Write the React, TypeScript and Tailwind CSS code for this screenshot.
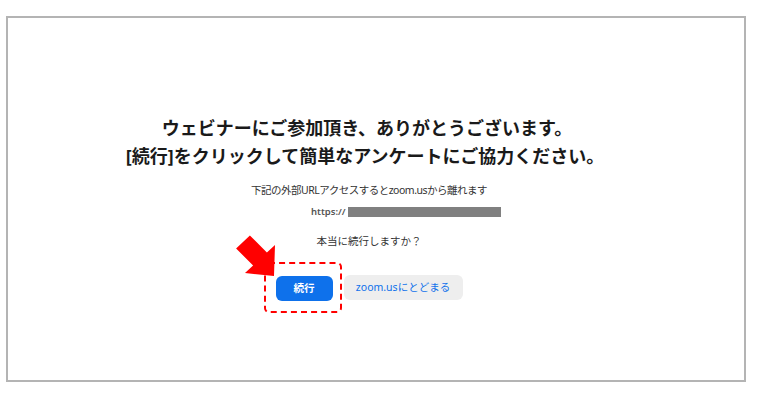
export default function App() {
  return (
    <div
      className="h-[402px] w-[759px] bg-white pl-[6px] pt-[16px]"
      style={{ fontFamily: '"Noto Sans", "Noto Sans CJK JP", sans-serif' }}
    >
      <div className="flex h-[366px] w-[740px] flex-col items-center border-2 border-[#b4b4b4] pr-[14px] pt-[96px]">
        {/* Title */}
        <h1 className="text-center text-[18px] font-bold leading-[28px] text-[#1a1a1a]">
          <span className="block -translate-x-[2px]">ウェビナーにご参加頂き、ありがとうございます。</span>
          <span className="block -translate-x-[4px]">[続行]をクリックして簡単なアンケートにご協力ください。</span>
        </h1>

        {/* External link notice */}
        <p className="mt-[12px] text-[10.5px] leading-[16px] tracking-[-0.5px] text-[#333333]">
          下記の外部URLアクセスするとzoom.usから離れます
        </p>
        <div className="mt-[6px] flex items-center self-start pl-[303px]">
          <span className="text-[9.5px] font-semibold leading-[16px] text-[#555555]">https://</span>
          <span className="ml-[2px] h-[10px] w-[153px] bg-[#808080]" />
        </div>

        <p className="mt-[13px] text-[10.5px] leading-[16px] text-[#333333]">本当に続行しますか？</p>

        {/* Buttons */}
        <div className="mt-[25px] flex items-center gap-[11px]">
          <div className="relative">
            <button className="h-[25px] w-[57px] rounded-[6px] bg-[#0e71eb] text-[10.5px] font-semibold text-white">
              続行
            </button>
            <div className="absolute -bottom-[12px] -left-[12px] -right-[9px] -top-[12px] rounded-[5px] border-2 border-dashed border-[#ff0000]" />
            <svg
              className="absolute left-[-46px] top-[-44px]"
              width="50"
              height="50"
              viewBox="0 0 50 50"
            >
              <polygon
                points="44,46 45,15 36.9,22.5 19.9,5.5 6.1,18.5 23.1,35.5 15,43"
                fill="#ff0000"
              />
            </svg>
          </div>
          <button className="h-[25px] w-[119px] rounded-[6px] bg-[#eeeeee] text-[10.5px] text-[#0e71eb]">
            zoom.usにとどまる
          </button>
        </div>
      </div>
    </div>
  );
}
